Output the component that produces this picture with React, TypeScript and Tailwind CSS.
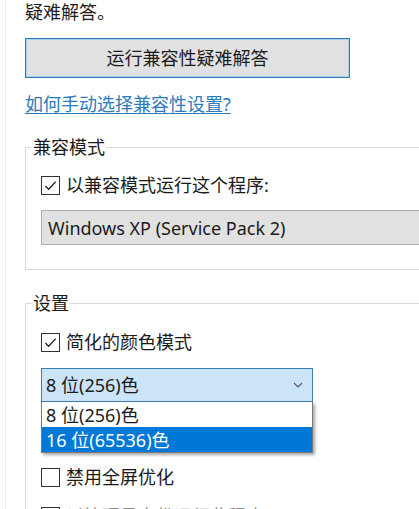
import type { ReactNode } from "react";

const font = { fontFamily: '"Noto Sans", "Noto Sans CJK SC", sans-serif' };

function CheckBox({ checked }: { checked?: boolean }) {
    return (
        <span className="w-[19px] h-[19px] border border-[#333] bg-white flex items-center justify-center shrink-0">
            {checked && (
                <svg className="w-[15px] h-[15px]" viewBox="0 0 16 16" fill="none" stroke="#222" strokeWidth={1.3}>
                    <path d="M2.5 8.5l3.5 3.5 7.5-8" />
                </svg>
            )}
        </span>
    );
}

function CheckRow({ checked, children, className = "" }: { checked?: boolean; children: ReactNode; className?: string }) {
    return (
        <label className={`flex items-center gap-[6px] h-6 ${className}`}>
            <CheckBox checked={checked} />
            <span>{children}</span>
        </label>
    );
}

export default function App() {
    return (
        <div className="w-[419px] h-[509px] overflow-hidden bg-white text-[18px] leading-6 text-[#1b1b1b]" style={font}>
            <div className="ml-[5px] h-full border-l border-[#ececec] pl-[19px]">
                <p>疑难解答。</p>

                <button className="mt-[14px] w-[325px] h-10 bg-[#e1e1e1] border border-[#2f79b9] shadow-[inset_0_0_0_1px_#a9d0ee] text-[18px]">
                    运行兼容性疑难解答
                </button>

                <div className="mt-[14px]">
                    <a className="text-[#2b7bbd] underline underline-offset-2 decoration-1" href="#">如何手动选择兼容性设置?</a>
                </div>

                {/* 兼容模式 */}
                <fieldset className="mt-[19px] w-[430px] border border-[#dcdcdc] px-[15px] pb-6">
                    <legend className="ml-[-9px] px-[1px]">兼容模式</legend>
                    <CheckRow checked className="mt-[14px]">以兼容模式运行这个程序:</CheckRow>
                    <div className="mt-[13px] h-[35px] bg-[#e1e1e1] border border-[#adadad] flex items-center pl-[6px]">
                        Windows XP (Service Pack 2)
                    </div>
                </fieldset>

                {/* 设置 */}
                <fieldset className="mt-[21px] w-[430px] border border-[#dcdcdc] border-b-0 px-[15px] pb-6">
                    <legend className="ml-[-9px] px-[1px]">设置</legend>
                    <CheckRow checked className="mt-[15px]">简化的颜色模式</CheckRow>

                    <div className="relative mt-[14px] w-[272px]">
                        <div className="h-[34px] bg-[#cce4f7] border border-[#3c7fb1] flex items-center justify-between pl-[4px] pr-[9px]">
                            <span>8 位(256)色</span>
                            <svg className="w-[10px] h-[6px]" viewBox="0 0 10 6" fill="none" stroke="#555" strokeWidth={1.1}>
                                <path d="M1 1l4 4 4-4" />
                            </svg>
                        </div>
                        <div className="absolute left-0 top-full w-[272px] bg-white border border-[#7a7a7a] border-t-0 shadow-[2px_2px_3px_rgba(0,0,0,0.35)] z-10">
                            <div className="h-[25px] flex items-center pl-[4px]">8 位(256)色</div>
                            <div className="h-[25px] flex items-center pl-[4px] bg-[#0078d7] text-white">16 位(65536)色</div>
                        </div>
                    </div>

                    <CheckRow className="mt-[63px]">禁用全屏优化</CheckRow>
                    <CheckRow className="mt-[15px] text-[#8a8a8a]">以管理员身份运行此程序</CheckRow>
                </fieldset>
            </div>
        </div>
    );
}
